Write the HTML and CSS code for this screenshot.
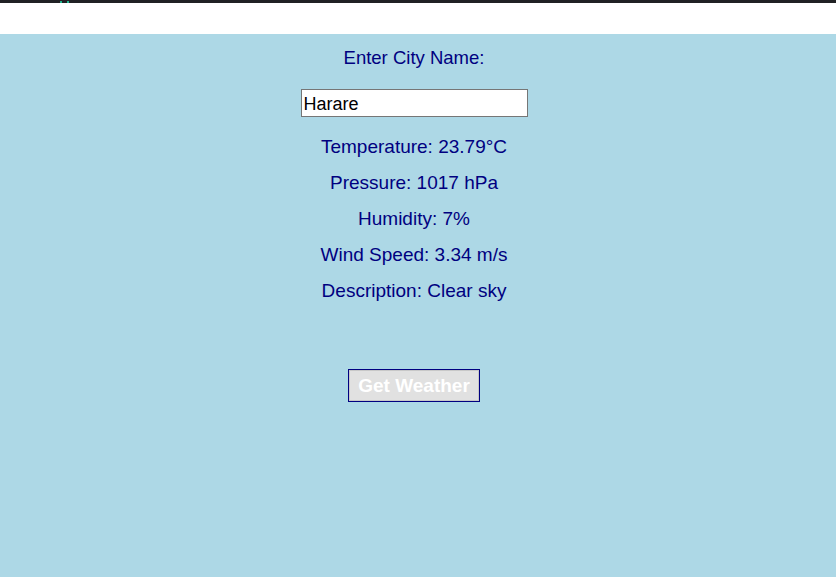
FILE: index.html
```html
<!DOCTYPE html>
<html>
<head>
<meta charset="utf-8">
<link rel="stylesheet" href="styles.css">
</head>
<body>
<div class="topbar"><span class="dot"></span><span class="dot"></span></div>
<div class="header"></div>
<main class="app">
  <label class="label" for="city">Enter City Name:</label>
  <input class="city" id="city" type="text" value="Harare">
  <div class="results">
    <p class="row">Temperature: 23.79°C</p>
    <p class="row">Pressure: 1017 hPa</p>
    <p class="row">Humidity: 7%</p>
    <p class="row">Wind Speed: 3.34 m/s</p>
    <p class="row">Description: Clear sky</p>
  </div>
  <button class="btn" type="button">Get Weather</button>
</main>
</body>
</html>
```
FILE: styles.css
```css
html, body {
  margin: 0;
  padding: 0;
  height: 100%;
}
body {
  font-family: "Liberation Sans", Arial, sans-serif;
  background: #add8e6;
  display: flex;
  flex-direction: column;
}
.topbar {
  height: 3px;
  background: #202124;
  display: flex;
  gap: 5px;
  padding-left: 60px;
  align-items: flex-end;
}
.dot {
  width: 2px;
  height: 2px;
  background: #1fb58f;
}
.header {
  height: 31px;
  background: #ffffff;
}
.app {
  flex: 1;
  display: flex;
  flex-direction: column;
  align-items: center;
  padding-top: 13px;
  padding-right: 8px;
  color: #000080;
  font-size: 19px;
}
.label {
  line-height: 21px;
  font-size: 18.5px;
  display: block;
}
.city {
  margin-top: 21px;
  width: 227px;
  height: 28px;
  box-sizing: border-box;
  border: 1px solid #767676;
  background: #ffffff;
  font-family: "Liberation Sans", Arial, sans-serif;
  font-size: 18px;
  color: #000000;
  padding: 2px 2px 0;
  outline: none;
}
.results {
  display: flex;
  flex-direction: column;
  align-items: center;
  gap: 15px;
  margin-top: 19px;
}
.row {
  margin: 0;
  line-height: 21px;
}
.btn {
  margin-top: 68px;
  height: 33px;
  width: 132px;
  box-sizing: border-box;
  border: 1px solid #000080;
  box-shadow: inset 0 0 0 1px #c8c8c8;
  background: #e1e1e1;
  color: #ffffff;
  font-family: "Liberation Sans", Arial, sans-serif;
  font-weight: bold;
  font-size: 19px;
  padding: 0;
}
```
